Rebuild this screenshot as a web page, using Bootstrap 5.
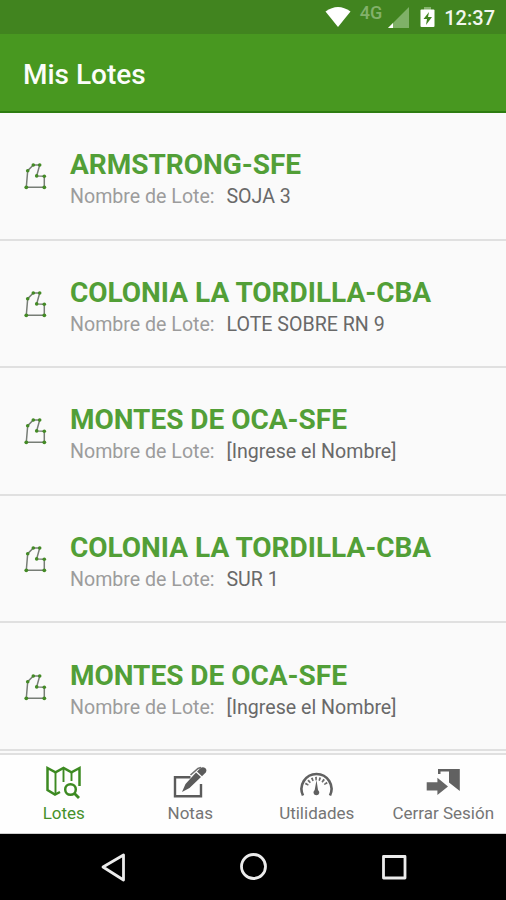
<!DOCTYPE html>
<html lang="es">
<head>
<meta charset="utf-8">
<meta name="viewport" content="width=device-width, initial-scale=1">
<title>Mis Lotes</title>
<link href="https://cdn.jsdelivr.net/npm/bootstrap@5.3.0/dist/css/bootstrap.min.css" rel="stylesheet">
<style>
body{font-family:Roboto,"Noto Sans",sans-serif;background:#fafafa;height:900px;overflow:hidden}
svg{display:block;flex:none}
.status-strip{height:34px;background:#41841f;color:#f1f7ee;padding-right:11px}
.net-label{color:#83b16b;font-size:18px;font-weight:500;line-height:18px;margin:-9px 6px 0 9px}
.battery{margin-left:10px}
.clock{font-size:20px;font-weight:500;line-height:34px;margin-left:9px;padding-top:2px}
.title-bar{height:79px;background:#489820;border-bottom:2px solid #2d7d10;padding:4px 23px 0}
.title-bar h1{font-size:28px;font-weight:500;color:#fbfdf9;line-height:32px}
.lot-list{height:640px}
.list-group-flush>.lot-row,.list-group-flush>.lot-row:last-child{height:127.6px;flex:none;border:0;border-bottom:2px solid #e0e0e0;background:#fafafa;padding:2px 24px 0 23px}
.lot-title{font-size:28px;font-weight:700;line-height:34px;color:#529f37;white-space:nowrap;letter-spacing:-.02px}
.lot-sub{font-size:19.6px;line-height:24px;margin-top:3px;color:#9c9c9c;white-space:nowrap}
.lot-sub b{font-weight:400;color:#696969;margin-left:7px}
.lot-text{margin-left:22px;padding-top:4px}
.tab-strip{height:81px;background:#fefefe;border-top:2px solid #e0e0e0;border-bottom:1px solid #cfcfcf}
.tab-item{color:#757575;font-size:17px;line-height:20px;padding-top:10px;text-decoration:none}
.tab-item span{padding:2px 0 0 1px}
.tab-item.current{color:#46912a}
.nav-strip{height:66px;background:#000}
</style>
<script src="https://cdn.jsdelivr.net/npm/bootstrap@5.3.0/dist/js/bootstrap.bundle.min.js"></script>
</head>
<body>
<svg width="0" height="0" class="position-absolute"><defs>
<g id="parcel"><path d="M3.3 25.3 4.7 8.700 10.300 3h6.400l-3 10.900 7.600.4v11z" fill="none" stroke="#777d76" stroke-width="1.500"/>
<g fill="#438a25"><circle cx="3.300" cy="25.300" r="1.900"/><circle cx="4.700" cy="8.700" r="1.800"/><circle cx="10.300" cy="3" r="1.800"/><circle cx="16.700" cy="3" r="1.800"/><circle cx="13.700" cy="13.900" r="1.800"/><circle cx="21.300" cy="14.300" r="1.800"/><circle cx="21.300" cy="25.300" r="1.900"/></g></g>
</defs></svg>
<div class="status-strip d-flex align-items-center justify-content-end">
<svg width="26" height="22" viewBox="0 0 26 22"><path d="M.5 5.500Q13-3.500 25.500 5.500L13 21z" fill="#fff"/></svg>
<span class="net-label">4G</span>
<svg width="22" height="22" viewBox="0 0 22 22"><path d="M0 22 21 1v21z" fill="#7fb168"/><path d="M0 22 5 17v5z" fill="#fff"/></svg>
<svg class="battery" width="15" height="22" viewBox="0 0 15 22"><path d="M4 1h7v3H4z" fill="#85b36e"/><path d="M1.500 3.500h12q1 0 1 1V20q0 1-1 1h-12q-1 0-1-1V4.500q0-1 1-1z" fill="#fff"/><path d="M9 6 3.500 13H7l-1 6 6-8H8z" fill="#41841f"/></svg>
<span class="clock">12:37</span>
</div>
<header class="title-bar d-flex align-items-center"><h1 class="m-0">Mis Lotes</h1></header>
<main class="lot-list list-group list-group-flush rounded-0">
<div class="lot-row list-group-item d-flex align-items-center"><svg width="25" height="29"><use href="#parcel"/></svg><div class="lot-text"><div class="lot-title">ARMSTRONG-SFE</div><div class="lot-sub">Nombre de Lote: <b>SOJA 3</b></div></div></div>
<div class="lot-row list-group-item d-flex align-items-center"><svg width="25" height="29"><use href="#parcel"/></svg><div class="lot-text"><div class="lot-title">COLONIA LA TORDILLA-CBA</div><div class="lot-sub">Nombre de Lote: <b>LOTE SOBRE RN 9</b></div></div></div>
<div class="lot-row list-group-item d-flex align-items-center"><svg width="25" height="29"><use href="#parcel"/></svg><div class="lot-text"><div class="lot-title">MONTES DE OCA-SFE</div><div class="lot-sub">Nombre de Lote: <b>[Ingrese el Nombre]</b></div></div></div>
<div class="lot-row list-group-item d-flex align-items-center"><svg width="25" height="29"><use href="#parcel"/></svg><div class="lot-text"><div class="lot-title">COLONIA LA TORDILLA-CBA</div><div class="lot-sub">Nombre de Lote: <b>SUR 1</b></div></div></div>
<div class="lot-row list-group-item d-flex align-items-center"><svg width="25" height="29"><use href="#parcel"/></svg><div class="lot-text"><div class="lot-title">MONTES DE OCA-SFE</div><div class="lot-sub">Nombre de Lote: <b>[Ingrese el Nombre]</b></div></div></div>
</main>
<nav class="tab-strip row g-0 text-center">
<a class="tab-item current col-3 d-flex flex-column align-items-center"><svg width="38" height="36" viewBox="0 0 38 36"><g fill="none" stroke="#3d8a22" stroke-width="2.500"><path d="M16 27 11 29.500 3.500 25V3l8 4.300 8-4.300 8 4.300L35.500 3V21"/><path d="M11.500 7.500V29M19.500 3.500V17M27.500 7.500V16" stroke-width="1.900"/><circle cx="26.500" cy="24.500" r="5.300"/><path d="m30.500 28.500 4.500 4.500" stroke-width="2.900"/></g></svg><span>Lotes</span></a>
<a class="tab-item col-3 d-flex flex-column align-items-center"><svg width="38" height="36" viewBox="0 0 38 36"><path d="M19.500 12.200H4v19h26V19" fill="none" stroke="#5b5b5b" stroke-width="2.400"/><path d="m11 27 3.500-8L25 7.500l5 4.500-11.500 11zM26 6.500l4-3.700q2-1.300 4.500.5 2 2 .5 4l-4 4z" fill="#5b5b5b"/><path d="M19.500 10 27 3.500l3-1" fill="none" stroke="#707070" stroke-width="1.600"/></svg><span>Notas</span></a>
<a class="tab-item col-3 d-flex flex-column align-items-center"><svg width="38" height="36" viewBox="0 0 38 36"><path d="M6 30.500A15 15 0 1 1 33 30.500" fill="none" stroke="#616161" stroke-width="2.600"/><path d="M9.500 20A11 11 0 0 1 29.500 20" fill="none" stroke="#6c6c6c" stroke-width="3.500" stroke-dasharray="1.700 2"/><path d="m19.500 15 1.500 10q1.500 1.500 1.300 3a3 3 0 0 1-5.800 0q-.3-1.500 1.200-3z" fill="#606060"/></svg><span>Utilidades</span></a>
<a class="tab-item col-3 d-flex flex-column align-items-center"><svg width="38" height="36" viewBox="0 0 38 36"><path d="M14 4h21.800v22L25 17.500V6.500h-8.500V9H14z" fill="#616161"/><path d="M2.700 17.200h10.700v-4.500L24 21.400l-10.600 8.700v-4.500H2.700z" fill="#666"/></svg><span>Cerrar Sesión</span></a>
</nav>
<footer class="nav-strip d-flex align-items-center justify-content-center">
<svg width="506" height="66" viewBox="0 0 506 66" fill="none" stroke="#ececec" stroke-width="2.800" stroke-linejoin="round"><path d="M123.500 21v25L103 33z"/><circle cx="253.500" cy="32.500" r="12"/><path d="M383.500 22.500h21.500v21.500H383.500z"/></svg>
</footer>
</body>
</html>
